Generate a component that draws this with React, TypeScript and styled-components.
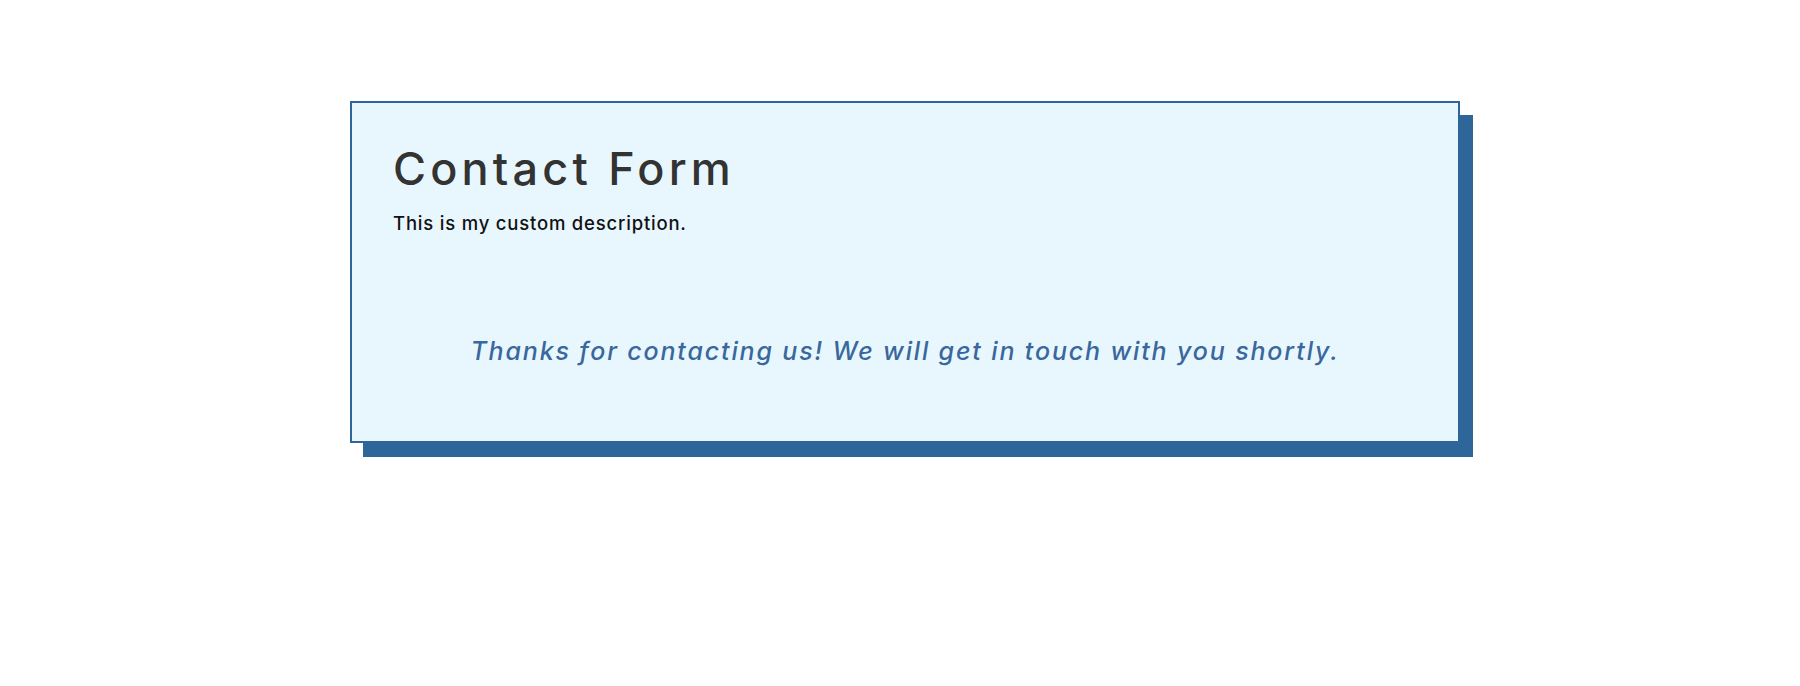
import styled, { createGlobalStyle } from "styled-components";

const GlobalStyle = createGlobalStyle`
  html, body {
    margin: 0;
    padding: 0;
    background: #ffffff;
  }
  body {
    font-family: "Inter", "Open Sans", sans-serif;
  }
`;

const Page = styled.div`
  display: flex;
  justify-content: center;
  padding: 101px 0 0 10px;
  min-height: 686px;
  box-sizing: border-box;
`;

const Card = styled.section`
  width: 1110px;
  height: 342px;
  box-sizing: border-box;
  background-color: #e8f7fe;
  border: 2px solid #2f6699;
  box-shadow: 13px 14px 0 #2f6699;
  padding: 38px 41px 0;
  display: flex;
  flex-direction: column;
`;

const Title = styled.h1`
  margin: 0;
  font-size: 45px;
  font-weight: 500;
  line-height: 56px;
  letter-spacing: 4.2px;
  color: #333333;
`;

const Description = styled.p`
  margin: 15px 0 0;
  font-size: 18.5px;
  font-weight: 500;
  letter-spacing: 0.8px;
  color: #111111;
`;

const Thanks = styled.p`
  margin: 102px 0 0;
  text-align: center;
  font-size: 25px;
  font-style: italic;
  font-weight: 500;
  letter-spacing: 1.85px;
  color: #3a679c;
`;

export default function App() {
  return (
    <>
      <GlobalStyle />
      <Page>
        <Card>
          <Title>Contact Form</Title>
          <Description>This is my custom description.</Description>
          <Thanks>Thanks for contacting us! We will get in touch with you shortly.</Thanks>
        </Card>
      </Page>
    </>
  );
}
